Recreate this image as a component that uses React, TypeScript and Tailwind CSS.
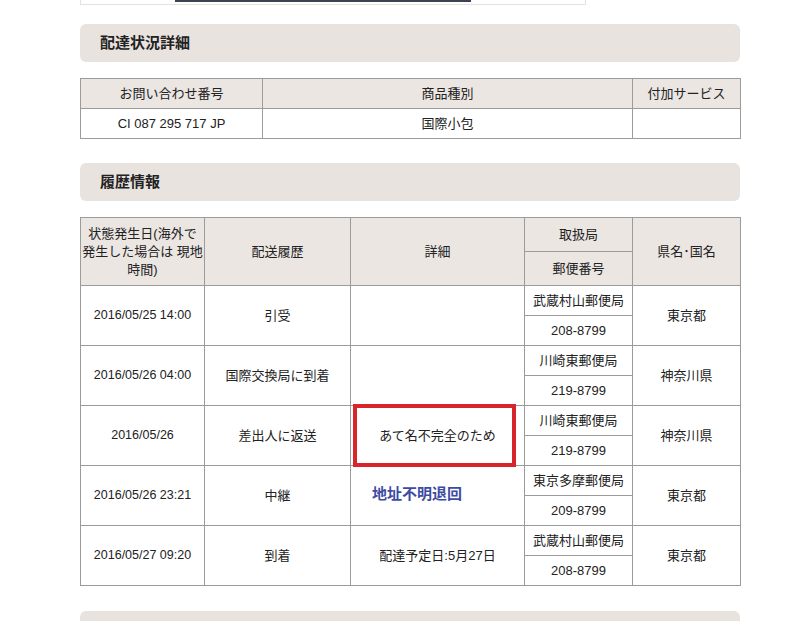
import React from 'react';

const font = { fontFamily: '"Liberation Sans", "Noto Sans CJK JP", sans-serif' };

function SectionHeader({ title }: { title: string }) {
  return (
    <div className="h-[38px] rounded-[6px] bg-[#e9e3df] flex items-center pl-[20px]">
      <h2 className="text-[15px] font-bold text-[#222]">{title}</h2>
    </div>
  );
}

const th = 'border border-[#9b9b9b] bg-[#ebe6e2] font-normal text-center align-middle p-0';
const td = 'border border-[#9b9b9b] text-center align-middle p-0';

const history = [
  { date: '2016/05/25 14:00', status: '引受', detail: '', office: '武蔵村山郵便局', zip: '208-8799', pref: '東京都' },
  { date: '2016/05/26 04:00', status: '国際交換局に到着', detail: '', office: '川崎東郵便局', zip: '219-8799', pref: '神奈川県' },
  { date: '2016/05/26', status: '差出人に返送', detail: 'あて名不完全のため', office: '川崎東郵便局', zip: '219-8799', pref: '神奈川県', boxed: true },
  { date: '2016/05/26 23:21', status: '中継', detail: '', office: '東京多摩郵便局', zip: '209-8799', pref: '東京都', note: '地址不明退回' },
  { date: '2016/05/27 09:20', status: '到着', detail: '配達予定日:5月27日', office: '武蔵村山郵便局', zip: '208-8799', pref: '東京都' },
];

export default function App() {
  return (
    <main className="min-h-screen bg-white text-[#222] text-[13px] overflow-hidden" style={font}>
      <div className="ml-[80px] w-[660px] pb-10">
        {/* top box, cut off */}
        <div className="w-[506px] h-[5px] border border-t-0 border-[#e2e2e2] relative">
          <div className="absolute top-0 left-[94px] w-[296px] h-[2px] bg-[#3b4250]" />
        </div>

        <div className="mt-[19px]">
          <SectionHeader title="配達状況詳細" />
        </div>

        <table className="mt-[16px] w-[660px] border-collapse table-fixed">
          <colgroup>
            <col className="w-[182px]" />
            <col className="w-[370px]" />
            <col className="w-[108px]" />
          </colgroup>
          <thead>
            <tr className="h-[30px]">
              <th className={th}>お問い合わせ番号</th>
              <th className={th}>商品種別</th>
              <th className={th}>付加サービス</th>
            </tr>
          </thead>
          <tbody>
            <tr className="h-[30px]">
              <td className={td}>CI 087 295 717 JP</td>
              <td className={td}>国際小包</td>
              <td className={td}></td>
            </tr>
          </tbody>
        </table>

        <div className="mt-[24px]">
          <SectionHeader title="履歴情報" />
        </div>

        <table className="mt-[16px] w-[660px] border-collapse table-fixed">
          <colgroup>
            <col className="w-[124px]" />
            <col className="w-[146px]" />
            <col className="w-[174px]" />
            <col className="w-[108px]" />
            <col className="w-[108px]" />
          </colgroup>
          <thead>
            <tr className="h-[34px]">
              <th className={th + ' leading-[18px]'} rowSpan={2}>
                状態発生日(海外で<br />発生した場合は 現地<br />時間)
              </th>
              <th className={th} rowSpan={2}>配送履歴</th>
              <th className={th} rowSpan={2}>詳細</th>
              <th className={th}>取扱局</th>
              <th className={th} rowSpan={2}>県名･国名</th>
            </tr>
            <tr className="h-[34px]">
              <th className={th}>郵便番号</th>
            </tr>
          </thead>
          <tbody>
            {history.map((h) => (
              <React.Fragment key={h.date + h.status}>
                <tr className="h-[30px]">
                  <td className={td + ' text-[12.5px]'} rowSpan={2}>{h.date}</td>
                  <td className={td} rowSpan={2}>{h.status}</td>
                  <td className={td + ' relative'} rowSpan={2}>
                    {h.detail}
                    {h.note && (
                      <div
                        className="text-left pl-[21px] pb-[4px] text-[15px] font-bold text-[#3d4ba3]"
                        style={{ fontFamily: '"Noto Sans CJK SC", sans-serif' }}
                      >
                        {h.note}
                      </div>
                    )}
                    {h.boxed && (
                      <div className="absolute left-[2px] right-[8px] -top-[2px] -bottom-[2px] border-[4px] border-[#d7252b]" />
                    )}
                  </td>
                  <td className={td}>{h.office}</td>
                  <td className={td} rowSpan={2}>{h.pref}</td>
                </tr>
                <tr className="h-[30px]">
                  <td className={td}>{h.zip}</td>
                </tr>
              </React.Fragment>
            ))}
          </tbody>
        </table>

        <div className="mt-[25px] h-[38px] rounded-[6px] bg-[#e9e3df]" />
      </div>
    </main>
  );
}
